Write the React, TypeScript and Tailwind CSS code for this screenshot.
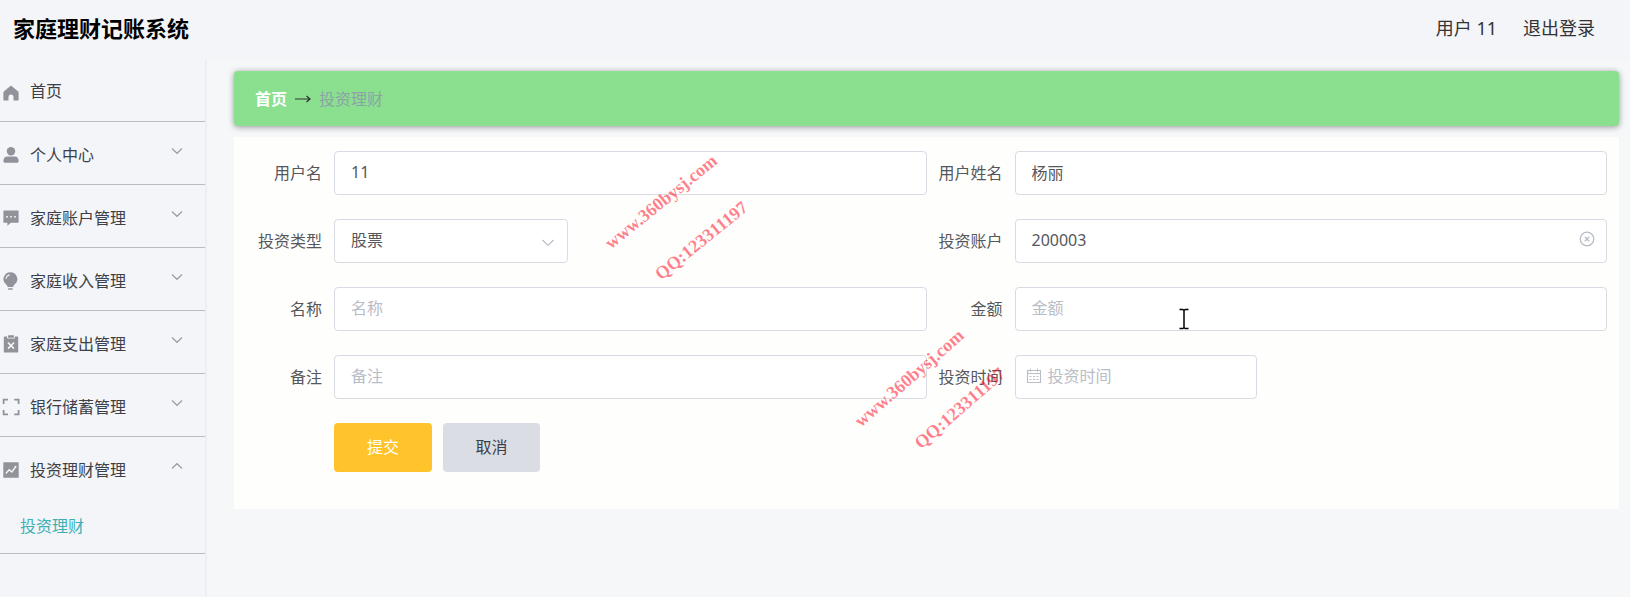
import type { ReactNode } from "react";

const ICON = "size-4 shrink-0 fill-[#909399]";

function HomeIcon() {
  return (
    <svg viewBox="0 0 16 16" className={ICON} aria-hidden="true">
      <path d="M8 .6 15.200 6.400c.3.300.4.500.4.900v7.600c0 .3-.2.500-.5.500h-4.600v-3.500a2.500 2.500 0 0 0-5 0v3.500H.9c-.3 0-.5-.2-.5-.5V7.300c0-.4.1-.6.4-.9Z" />
    </svg>
  );
}

function UserIcon() {
  return (
    <svg viewBox="0 0 16 16" className={ICON} aria-hidden="true">
      <circle cx="8" cy="4.300" r="4.200" />
      <path d="M.4 13.800c0-2.700 1.600-4.200 4-4.200h7.200c2.400 0 4 1.500 4 4.200 0 1.400-.6 2-1.500 2H1.900c-.9 0-1.500-.6-1.500-2Z" />
    </svg>
  );
}

function CommentIcon() {
  return (
    <svg viewBox="0 0 16 16" className={ICON} aria-hidden="true">
      <path
        fillRule="evenodd"
        d="M.9.400h14.200c.3 0 .5.200.5.500v11.400c0 .3-.2.500-.5.500H7.800L4.400 15.800v-3H.9c-.3 0-.5-.2-.5-.5V.9c0-.3.200-.5.500-.5ZM3.200 5.900v1.700h1.700V5.900Zm4 0v1.700h1.700V5.900Zm4 0v1.700h1.700V5.900Z"
      />
    </svg>
  );
}

function BulbIcon() {
  return (
    <svg viewBox="0 0 16 18" className="h-[18px] w-4 shrink-0 fill-[#909399]" aria-hidden="true">
      <path
        fillRule="evenodd"
        d="M7.400.2a6.900 6.900 0 0 1 4.200 12.400c-.9.700-1.200 1.300-1.300 2.400H4.500c-.1-1.100-.4-1.700-1.300-2.400A6.900 6.900 0 0 1 7.400.2ZM6.700 2.300C4.300 2.700 2.700 4.300 2.500 6.600l1.200.1C3.900 5 5.100 3.800 6.800 3.500Z"
      />
      <rect x="5" y="16.200" width="4.800" height="1.500" rx=".7" />
    </svg>
  );
}

function ClipboardIcon() {
  return (
    <svg viewBox="0 0 16 18" className="h-[18px] w-4 shrink-0 fill-[#909399]" aria-hidden="true">
      <rect x="5" y=".3" width="6" height="2.400" rx=".6" />
      <path
        fillRule="evenodd"
        d="M1.500 1.600h2.700v1.900h7.600V1.600h2.700c.4 0 .7.300.7.700v14.600c0 .4-.3.700-.7.700H1.500c-.4 0-.7-.3-.7-.7V2.300c0-.4.3-.7.7-.7Z"
      />
      <path d="m5 7.600 6 6M11 7.600l-6 6" stroke="#f3f5f9" strokeWidth="1.500" />
    </svg>
  );
}

function FrameIcon() {
  return (
    <svg viewBox="0 0 16 18" className="h-[18px] w-4 shrink-0 overflow-visible" fill="none" stroke="#909399" strokeWidth="1.800" aria-hidden="true">
      <path d="M.6 6V1.600H5M11.200 1.600h4.400V6M15.600 12v4.400h-4.400M5 16.400H.6V12" />
    </svg>
  );
}

function ChartIcon() {
  return (
    <svg viewBox="0 0 16 16" className={ICON} aria-hidden="true">
      <rect x=".3" y=".3" width="15.400" height="15.400" rx=".5" />
      <path d="m2.800 11.400 3.400-3.600 2.600 2.100 3.400-4.400" fill="none" stroke="#f3f5f9" strokeWidth="1.400" />
      <circle cx="12.500" cy="4.800" r="1.100" fill="#f3f5f9" />
    </svg>
  );
}

function Chevron({ up = false }: { up?: boolean }) {
  return (
    <svg
      viewBox="0 0 12 8"
      className={up ? "h-2 w-3 shrink-0 rotate-180" : "h-2 w-3 shrink-0"}
      fill="none"
      stroke="#9b9ea5"
      strokeWidth="1.200"
      aria-hidden="true"
    >
      <path d="m1 1.500 5 4.800 5-4.800" />
    </svg>
  );
}

const MENU: { label: string; icon: ReactNode; open?: boolean }[] = [
  { label: "个人中心", icon: <UserIcon /> },
  { label: "家庭账户管理", icon: <CommentIcon /> },
  { label: "家庭收入管理", icon: <BulbIcon /> },
  { label: "家庭支出管理", icon: <ClipboardIcon /> },
  { label: "银行储蓄管理", icon: <FrameIcon /> },
  { label: "投资理财管理", icon: <ChartIcon />, open: true },
];

const FIELD =
  "h-11 w-full rounded border border-[#d8dbe2] bg-white px-4 pb-0.5 text-base text-[#55575c] outline-none placeholder:text-[#b9bdc6] placeholder:opacity-100";

function Field({ id, label, children }: { id: string; label: string; children: ReactNode }) {
  return (
    <div className="flex items-center">
      <label htmlFor={id} className="w-[88px] shrink-0 pr-3 text-right text-base text-[#55575c]">
        {label}
      </label>
      <div className="min-w-0 flex-1">{children}</div>
    </div>
  );
}

const MARK =
  "pointer-events-none absolute origin-bottom-left whitespace-nowrap font-['Liberation_Serif','Times_New_Roman',serif] text-lg leading-none font-bold text-[#ff0018]/50";

export default function App() {
  return (
    <div className="relative flex min-h-screen flex-col overflow-hidden bg-[#f5f7f9] font-['Noto_Sans','Noto_Sans_CJK_SC',sans-serif]">
      <header className="flex h-15 items-center justify-between bg-[#f3f5f9] pr-[35px] pb-1 pl-[13px]">
        <h1 className="text-[22px] leading-7 font-bold text-black">家庭理财记账系统</h1>
        <nav className="flex items-center gap-[26px] text-lg text-[#333333]">
          <span>用户 11</span>
          <a href="#logout">退出登录</a>
        </nav>
      </header>

      <div className="flex flex-1">
        <aside className="w-[207px] shrink-0 border-r-2 border-[#eeeff1] bg-[#f3f5f9]">
          <ul className="text-base text-[#3d4047]">
            <li className="border-b border-[#b9bcc2]">
              <a href="#home" className="flex h-[61px] items-center gap-[11px] pl-[3px]">
                <span className="pt-1">
                  <HomeIcon />
                </span>
                <span>首页</span>
              </a>
            </li>
            {MENU.map((item) => (
              <li key={item.label} className="border-b border-[#b9bcc2]">
                <button type="button" className="flex h-[62px] w-full items-center gap-[11px] pt-1 pr-[22px] pl-[3px] text-left">
                  {item.icon}
                  <span className="flex-1">{item.label}</span>
                  <span className="pb-2">
                    <Chevron up={item.open} />
                  </span>
                </button>
                {item.open && (
                  <a href="#invest" className="flex h-[54px] items-center pl-5 text-[#3cb0b4]">
                    投资理财
                  </a>
                )}
              </li>
            ))}
          </ul>
        </aside>

        <main className="min-w-0 flex-1 pt-[11px] pr-[11px] pl-[27px]">
          <nav className="flex h-[55px] items-center gap-2 rounded-sm bg-[#8ae08f] px-[21px] text-base shadow-[0_1px_6px_rgba(0,0,0,0.4)]">
            <a href="#home" className="font-bold text-white">
              首页
            </a>
            <svg viewBox="0 0 16 8" className="h-2 w-4" fill="none" stroke="#303133" strokeWidth="1.200" aria-hidden="true">
              <path d="M0 4h15M11.500 1l3.500 3-3.500 3" />
            </svg>
            <span className="text-[#8ca3a6]">投资理财</span>
          </nav>

          <form className="mt-[11px] bg-[#fefefd] px-3 pt-[14px] pb-[37px]" onSubmit={(e) => e.preventDefault()}>
            <div className="grid grid-cols-2 gap-y-6">
              <Field id="username" label="用户名">
                <input id="username" className={FIELD} defaultValue="11" />
              </Field>
              <Field id="fullname" label="用户姓名">
                <input id="fullname" className={FIELD} defaultValue="杨丽" />
              </Field>
              <Field id="type" label="投资类型">
                <div className="relative w-[234px]">
                  <select id="type" className={`${FIELD} appearance-none`} defaultValue="股票">
                    <option>股票</option>
                    <option>基金</option>
                  </select>
                  <svg
                    viewBox="0 0 12 8"
                    className="pointer-events-none absolute top-5 right-[14px] h-2 w-3"
                    fill="none"
                    stroke="#b9bdc6"
                    strokeWidth="1.200"
                    aria-hidden="true"
                  >
                    <path d="m.5 1 5.500 5.500L11.500 1" />
                  </svg>
                </div>
              </Field>
              <Field id="account" label="投资账户">
                <div className="relative">
                  <input id="account" className={FIELD} defaultValue="200003" />
                  <button type="button" aria-label="清空" className="absolute top-3 right-3">
                    <svg viewBox="0 0 16 16" className="size-4" fill="none" stroke="#b9bdc6" strokeWidth="1.300" aria-hidden="true">
                      <circle cx="8" cy="8" r="6.800" />
                      <path d="m5.800 5.800 4.400 4.400M10.200 5.800 5.800 10.200" />
                    </svg>
                  </button>
                </div>
              </Field>
              <Field id="name" label="名称">
                <input id="name" className={FIELD} placeholder="名称" />
              </Field>
              <Field id="amount" label="金额">
                <input id="amount" className={FIELD} placeholder="金额" />
              </Field>
              <Field id="remark" label="备注">
                <input id="remark" className={FIELD} placeholder="备注" />
              </Field>
              <Field id="date" label="投资时间">
                <div className="relative w-[242px]">
                  <input
                    id="date"
                    className="h-11 w-full rounded border border-[#d8dbe2] bg-white pr-4 pb-0.5 pl-8 text-base text-[#55575c] outline-none placeholder:text-[#b9bdc6] placeholder:opacity-100"
                    placeholder="投资时间"
                  />
                  <svg
                    viewBox="0 0 16 16"
                    className="pointer-events-none absolute top-[13px] left-[11px] size-4"
                    fill="none"
                    stroke="#b9bdc6"
                    strokeWidth="1.100"
                    aria-hidden="true"
                  >
                    <path d="M1.500 2.500h13v12h-13ZM1.500 5.500h13M4.500.8v3M11.500.8v3" />
                    <path d="M3.500 8.500h2M7 8.500h2M10.500 8.500h2M3.500 11.500h2M7 11.500h2M10.500 11.500h2" />
                  </svg>
                </div>
              </Field>
            </div>
            <div className="mt-6 flex gap-[11px] pl-[88px] text-base">
              <button type="submit" className="h-[49px] w-[98px] rounded bg-[#ffc42b] pb-0.5 text-white">
                提交
              </button>
              <button type="button" className="h-[49px] w-[97px] rounded bg-[#dadde3] pb-0.5 text-[#3d4047]">
                取消
              </button>
            </div>
          </form>
        </main>
      </div>

      <div className="pointer-events-none absolute inset-0">
        <span aria-hidden="true" className={`${MARK} top-[234px] left-[613px] rotate-[-39deg]`}>
          www.360bysj.com
        </span>
        <span aria-hidden="true" className={`${MARK} top-[265px] left-[663px] rotate-[-39deg]`}>
          QQ:123311197
        </span>
        <span aria-hidden="true" className={`${MARK} top-[412px] left-[863px] rotate-[-41deg]`}>
          www.360bysj.com
        </span>
        <span aria-hidden="true" className={`${MARK} top-[434px] left-[923px] rotate-[-41deg]`}>
          QQ:123311197
        </span>
        <svg viewBox="0 0 10 22" className="absolute top-[308px] left-[1179px] h-[22px] w-[10px]" fill="none" stroke="#000000" strokeWidth="1.500" aria-hidden="true">
          <path d="M.5 1.500h3.300L5 2.300l1.200-.8h3.300M5 2v18M.5 20.500h3.300L5 19.700l1.200.8h3.300" />
        </svg>
      </div>
    </div>
  );
}
